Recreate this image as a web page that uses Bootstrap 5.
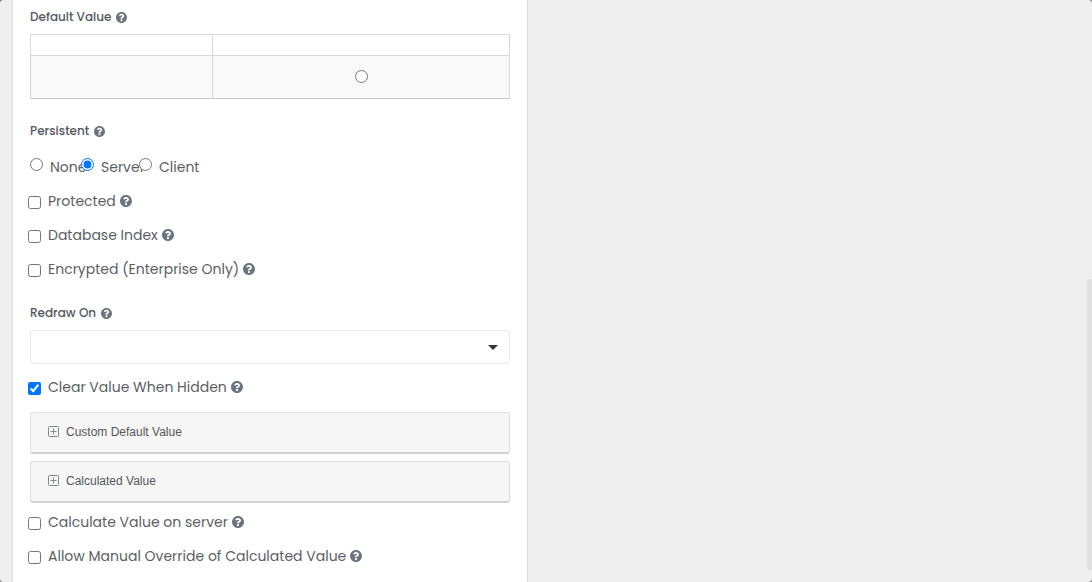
<!DOCTYPE html>
<html lang="en">
<head>
<meta charset="utf-8">
<meta name="viewport" content="width=device-width, initial-scale=1">
<title>Component settings</title>
<link href="https://cdn.jsdelivr.net/npm/bootstrap@5.3.0/dist/css/bootstrap.min.css" rel="stylesheet">
<style>
body { background: #8c8c8c; font-family: Poppins, Inter, sans-serif; font-size: 14px; line-height: 24px; color: #5c5e63; }
.dialog-body { background: #efefef; border-radius: 4px; }
.panel-col { padding-left: 12px; padding-right: 18px; }
.panel { background: #fff; border: solid #dcdcdc; border-width: 0 1px; padding: 7px 17px 12px; }
.field-label { display: flex; align-items: center; gap: 5px; font-size: 12px; font-weight: 500; line-height: 20px; margin-bottom: 7px; color: #56585e; }
.help { width: 12px; height: 12px; fill: #6c757d; flex: none; }
.field-label .help { width: 11px; height: 11px; }
input[type=checkbox], input[type=radio] { width: 13px; height: 13px; margin: 0; accent-color: #0075ff; flex: none; }
.values { width: 100%; margin-bottom: 22px; border: 1px solid #d8d8d8; border-bottom-color: #c8c8c8; }
.values th, .values td { border-left: 1px solid #d8d8d8; text-align: center; padding: 0; }
.values th { height: 21px; width: 38%; }
.values th + th { width: 62%; }
.values td { height: 43px; background: #f9f9f9; border-top: 1px solid #d8d8d8; }
.values input { display: block; margin: 0 auto 2px; }
.storage { display: grid; grid-template-columns: 51px 58px 1fr; margin: 14px 0 10px; }
.storage label { display: flex; gap: 7px; white-space: nowrap; }
.storage input { position: relative; margin-top: 3px; }
.check-row { display: flex; align-items: center; margin: 0 0 10px -2px; }
.check-row input { margin-top: 2px; }
.check-row label { display: flex; align-items: center; gap: 4px; padding-left: 7px; }
.section-start { margin-top: 22px; }
.redraw { height: 34px; border: 1px solid #e8e9ee; border-radius: 3px; background-color: #fff; background-position: right 11px center; background-size: 10px 5px; margin-bottom: 11px;
  background-image: url("data:image/svg+xml,%3Csvg xmlns='http://www.w3.org/2000/svg' viewBox='0 0 10 5'%3E%3Cpath d='M0 0h10L5 5z' fill='%23333'/%3E%3C/svg%3E"); }
.folds { padding-top: 3px; }
.fold { display: flex; align-items: center; gap: 7px; width: 100%; height: 42px; padding: 0 17px 2px; margin-bottom: 7px; background: #f6f6f6; border: 1px solid #dddfe3; border-bottom: 2px solid #cfd1d5; border-radius: 3px; font: 12px "Liberation Sans", Arial, sans-serif; color: #55575a; text-align: left; }
.fold svg { width: 11px; height: 11px; fill: none; stroke: #858a90; }
.scroll-thumb { position: fixed; right: 0; top: 48%; bottom: 12px; width: 5px; border-radius: 3px 0 0 3px; background: #e0e0e0; }
</style>
</head>
<body>
<svg class="d-none"><symbol id="q" viewBox="8 8 496 496"><path d="M504 256c0 136.997-111.043 248-248 248S8 392.997 8 256C8 119.083 119.043 8 256 8s248 111.083 248 248zM262.655 90c-54.497 0-89.255 22.957-116.549 63.758-3.536 5.286-2.353 12.415 2.715 16.258l34.699 26.31c5.205 3.947 12.621 3.008 16.665-2.122 17.864-22.658 30.113-35.797 57.303-35.797 20.429 0 45.698 13.148 45.698 32.958 0 14.976-12.363 22.667-32.534 33.976C247.128 238.528 216 254.941 216 296v4c0 6.627 5.373 12 12 12h56c6.627 0 12-5.373 12-12v-1.333c0-28.462 83.186-29.647 83.186-106.667 0-58.002-60.165-102-116.531-102zM256 338c-25.365 0-46 20.635-46 46 0 25.364 20.635 46 46 46s46-20.636 46-46c0-25.365-20.635-46-46-46z"/></symbol></svg>
<main class="dialog-body container-fluid px-0 min-vh-100">
  <div class="row g-0">
    <div class="col-6 panel-col">
      <form class="panel min-vh-100">
        <div class="field-label">Default Value <svg class="help"><use href="#q"/></svg></div>
        <table class="values">
          <thead><tr><th></th><th></th></tr></thead>
          <tbody><tr><td></td><td><input type="radio" name="default" aria-label="Default value"></td></tr></tbody>
        </table>

        <div class="field-label">Persistent <svg class="help"><use href="#q"/></svg></div>
        <div class="storage">
          <label><input type="radio" name="persistent"> None</label>
          <label><input type="radio" name="persistent" checked> Server</label>
          <label><input type="radio" name="persistent"> Client</label>
        </div>
        <div class="check-row"><input type="checkbox" id="protected"><label for="protected">Protected <svg class="help"><use href="#q"/></svg></label></div>
        <div class="check-row"><input type="checkbox" id="dbindex"><label for="dbindex">Database Index <svg class="help"><use href="#q"/></svg></label></div>
        <div class="check-row mb-0"><input type="checkbox" id="encrypted"><label for="encrypted">Encrypted (Enterprise Only) <svg class="help"><use href="#q"/></svg></label></div>

        <label class="field-label section-start" for="redraw">Redraw On <svg class="help"><use href="#q"/></svg></label>
        <select class="form-select redraw" id="redraw"><option></option></select>
        <div class="check-row"><input type="checkbox" id="clear" checked><label for="clear">Clear Value When Hidden <svg class="help"><use href="#q"/></svg></label></div>

        <div class="folds">
          <button type="button" class="fold"><svg viewBox="0 0 11 11"><rect x=".5" y=".5" width="10" height="10" rx="1"/><path d="M5.500 2.500v6M2.500 5.500h6"/></svg>Custom Default Value</button>
          <button type="button" class="fold"><svg viewBox="0 0 11 11"><rect x=".5" y=".5" width="10" height="10" rx="1"/><path d="M5.500 2.500v6M2.500 5.500h6"/></svg>Calculated Value</button>
        </div>
        <div class="check-row"><input type="checkbox" id="server"><label for="server">Calculate Value on server <svg class="help"><use href="#q"/></svg></label></div>
        <div class="check-row mb-0"><input type="checkbox" id="override"><label for="override">Allow Manual Override of Calculated Value <svg class="help"><use href="#q"/></svg></label></div>
      </form>
    </div>
  </div>
  <div class="scroll-thumb"></div>
</main>
<script src="https://cdn.jsdelivr.net/npm/bootstrap@5.3.0/dist/js/bootstrap.bundle.min.js"></script>
</body>
</html>
